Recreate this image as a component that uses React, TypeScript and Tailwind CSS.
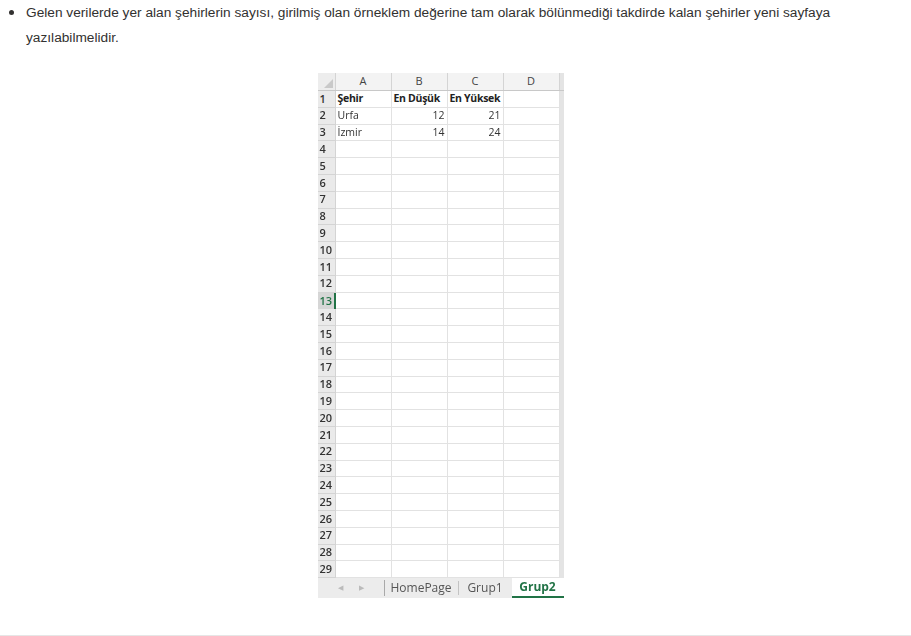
const rows = Array.from({ length: 29 }, (_, i) => i + 1);

const data: Record<number, [string, string, string]> = {
  1: ["Şehir", "En Düşük", "En Yüksek"],
  2: ["Urfa", "12", "21"],
  3: ["İzmir", "14", "24"],
};

const cell =
  "flex w-[56px] items-center overflow-hidden whitespace-nowrap border-r border-b border-[#e2e2e2] px-[2px] ";

const Sheet = () => {
  return (
    <div className="w-[246px] bg-white font-['Open_Sans','Liberation_Sans',sans-serif] text-[10.5px] text-[#333] blur-[0.3px]">
      {/* column header */}
      <div className="flex h-[18px] border-b border-[#c8c8c8] bg-[#f3f3f3]">
        <div className="relative w-[18px] border-r border-[#d4d4d4] bg-[#ededed]">
          <div className="absolute bottom-[2px] right-[2px] h-0 w-0 border-b-[9px] border-l-[9px] border-b-[#c9c9c9] border-l-transparent" />
        </div>
        {["A", "B", "C", "D"].map((c) => (
          <div
            key={c}
            className="flex w-[56px] items-center justify-center border-r border-[#d4d4d4] text-[11px] text-[#444]"
          >
            {c}
          </div>
        ))}
        <div className="w-[4px] bg-[#e4e4e4]" />
      </div>

      {/* rows */}
      {rows.map((r) => {
        const d = data[r];
        const bold = r === 1 ? "font-bold text-[#222] tracking-[-0.3px] " : "";
        return (
          <div key={r} className="flex h-[16.8px]">
            <div
              className={
                r === 13
                  ? "flex w-[18px] items-center border-r-2 border-[#217346] bg-[#d6d6d6] pl-[2px] text-[11px] font-semibold text-[#217346]"
                  : "flex w-[18px] items-center border-r border-b border-[#d4d4d4] bg-[#eaeaea] pl-[2px] text-[11px] font-semibold text-[#333]"
              }
            >
              {r}
            </div>
            <div className={cell + bold}>{d ? d[0] : ""}</div>
            <div className={cell + bold + (r === 1 ? "justify-start" : "justify-end")}>
              {d ? d[1] : ""}
            </div>
            <div className={cell + bold + (r === 1 ? "justify-start" : "justify-end")}>
              {d ? d[2] : ""}
            </div>
            <div className="w-[56px] border-r border-b border-[#e2e2e2]" />
            <div className="w-[4px] bg-[#e4e4e4]" />
          </div>
        );
      })}

      {/* sheet tabs */}
      <div className="flex h-[20px] items-stretch bg-[#ececec] text-[12px] text-[#555]">
        <div className="flex w-[66px] items-center justify-center gap-4 text-[7px] text-[#bbb]">
          <span>◀</span>
          <span>▶</span>
        </div>
        <div className="my-[2px] w-px bg-[#a9a9a9]" />
        <div className="flex w-[73px] items-center justify-center">HomePage</div>
        <div className="my-[3px] w-px bg-[#c3c3c3]" />
        <div className="flex w-[53px] items-center justify-center">Grup1</div>
        <div className="flex flex-1 items-center justify-center border-b-2 border-[#217346] bg-white font-bold text-[#217346]">
          Grup2
        </div>
      </div>
    </div>
  );
};

const App = () => {
  return (
    <div className="flex h-[636px] w-[911px] flex-col justify-between bg-white font-['Liberation_Sans',Arial,sans-serif] text-[#323130]">
      <ul className="pl-[9px] pr-[56px]">
        <li className="flex gap-[12px]">
          <span className="mt-[10px] h-[5px] w-[5px] shrink-0 rounded-full bg-[#323130]" />
          <div className="flex-1">
            <p className="text-[13.7px] leading-[25px]">
              Gelen verilerde yer alan şehirlerin sayısı, girilmiş olan örneklem değerine tam olarak bölünmediği takdirde kalan şehirler yeni sayfaya yazılabilmelidir.
            </p>
            <div className="mt-[23px] flex justify-center">
              <Sheet />
            </div>
          </div>
        </li>
      </ul>
      <div className="h-px w-full bg-[#e6e6e6]" />
    </div>
  );
};

export default App;
